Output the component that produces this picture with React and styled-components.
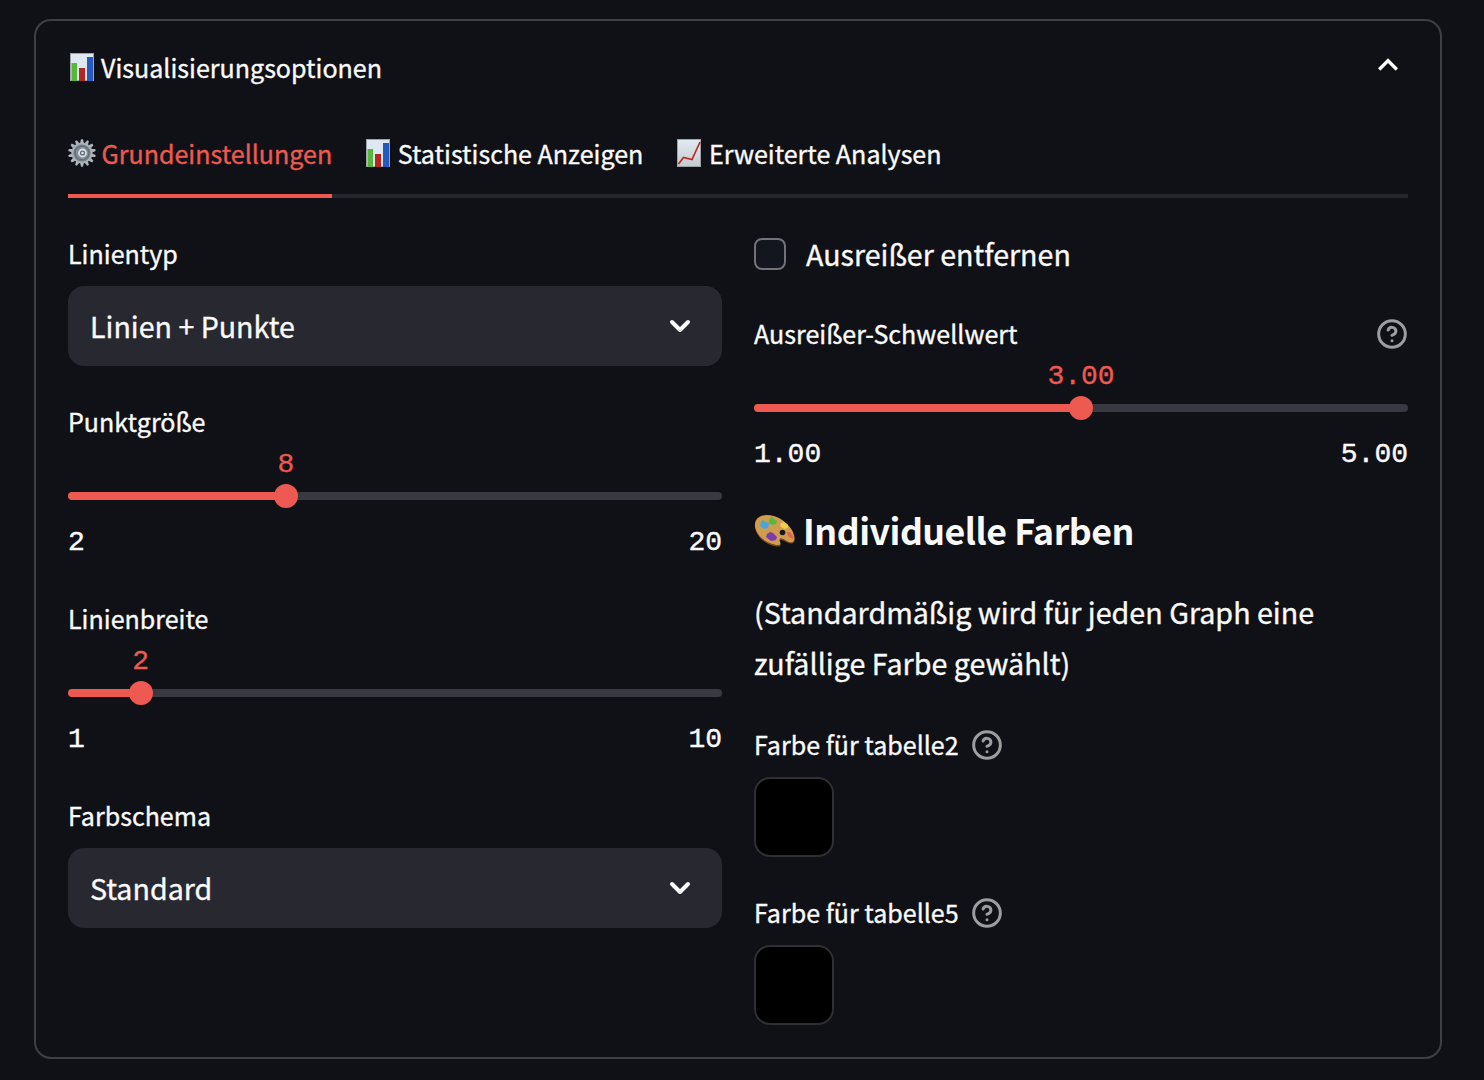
import React from "react";
import styled, { createGlobalStyle } from "styled-components";

const RED = "#ee5951";
const SANS = '"Noto Sans CJK SC", "Noto Sans", sans-serif';
const MONO = '"Liberation Mono", monospace';

const GlobalStyle = createGlobalStyle`
  *, *::before, *::after { box-sizing: border-box; }
  body {
    margin: 0;
    background: #101116;
    color: #fafafa;
    font-family: ${SANS};
    -webkit-font-smoothing: antialiased;
  }
  svg { display: block; flex: none; }
`;

const Page = styled.main`
  min-height: 1080px;
  padding: 19px 42px 21px 34px;
`;

const Panel = styled.section`
  height: 1040px;
  padding: 0 32px;
  border: 2px solid #3f4045;
  border-radius: 17px;
`;

const Summary = styled.header`
  display: flex;
  align-items: flex-start;
  justify-content: space-between;
  height: 90px;
  padding-top: 24px;
`;

const Text = styled.span`
  font-size: ${(p) => p.$size || 25.05}px;
  font-weight: ${(p) => p.$weight || 400};
  letter-spacing: ${(p) => p.$track || 0}px;
  line-height: 40px;
  white-space: nowrap;
  -webkit-text-stroke: ${(p) => (p.$weight ? 0 : 0.35)}px currentColor;
`;

const Title = styled.div`
  display: flex;
  align-items: center;
  gap: 5px;
  padding-top: 2px;
`;

const Tabs = styled.nav`
  display: flex;
  gap: 32px;
  height: 87px;
  border-bottom: 4px solid #26272c;
`;

const Tab = styled.button`
  display: flex;
  align-items: center;
  gap: 5.5px;
  height: 87px;
  padding: 0;
  border: 0;
  border-bottom: 4px solid ${(p) => (p.$active ? RED : "transparent")};
  background: none;
  color: ${(p) => (p.$active ? RED : "#fafafa")};
  font-family: inherit;
`;

const Columns = styled.div`
  display: grid;
  grid-template-columns: 1fr 1fr;
  gap: 32px;
  padding-top: 32px;
`;

const Column = styled.div`
  display: flex;
  flex-direction: column;
  gap: 32px;
`;

const Label = styled.div`
  display: flex;
  align-items: center;
  justify-content: ${(p) => (p.$spread ? "space-between" : "flex-start")};
  gap: 12px;
  height: 48px;

  ${Text} { padding-bottom: 2px; }
`;

const SelectBox = styled.div`
  display: flex;
  align-items: center;
  justify-content: space-between;
  height: 80px;
  margin-top: 8px;
  padding: 0 22px;
  border-radius: 16px;
  background: #282830;
`;

const SliderBody = styled.div`
  display: flow-root;
  height: 117px;
`;

const Track = styled.div`
  position: relative;
  height: 8px;
  margin: 46px 0 27px;
  border-radius: 4px;
  background: linear-gradient(to right, ${RED} ${(p) => p.$at}%, #383941 ${(p) => p.$at}%);
`;

const Thumb = styled.div`
  position: absolute;
  top: -8px;
  left: ${(p) => p.$at}%;
  width: 24px;
  height: 24px;
  margin-left: -12px;
  border-radius: 50%;
  background: ${RED};
`;

const Value = styled.span`
  position: absolute;
  bottom: 27px;
  left: 50%;
  transform: translateX(-50%);
  color: ${RED};
  font: 28px/32px ${MONO};
  -webkit-text-stroke: 0.3px currentColor;
`;

const Limits = styled.div`
  display: flex;
  justify-content: space-between;
  font: 28px/32px ${MONO};
  -webkit-text-stroke: 0.4px currentColor;
`;

const CheckRow = styled.label`
  display: flex;
  align-items: center;
  gap: 20px;
  height: 48px;
`;

const Box = styled.span`
  width: 32px;
  height: 32px;
  border: 2px solid #727378;
  border-radius: 8px;
  background: #13161f;
`;

const Heading = styled.h3`
  display: flex;
  align-items: center;
  gap: 8px;
  height: 48px;
  margin: 0;

  ${Text} { padding-bottom: 2px; }
`;

const Note = styled.p`
  height: 102px;
  margin: -1px 0 1px;
  font-size: 28.66px;
  line-height: 51px;
  -webkit-text-stroke: 0.35px currentColor;
`;

const Swatch = styled.div`
  width: 80px;
  height: 80px;
  margin-top: 8px;
  border: 2px solid #303033;
  border-radius: 16px;
  background: #000;
`;

function BarChartIcon() {
  return (
    <svg width="28" height="30" viewBox="0 0 28 30">
      <rect x="2" y="1" width="24" height="28" fill="#9ba3ab" />
      <rect x="3" y="2" width="22" height="26" fill="#dfe7f0" />
      <rect x="3.5" y="11" width="5.5" height="18" fill="#55b73b" />
      <rect x="11" y="16" width="6" height="13" fill="#b3271e" />
      <rect x="19" y="5" width="6" height="24" fill="#2459bf" />
    </svg>
  );
}

function LineChartIcon() {
  return (
    <svg width="28" height="30" viewBox="0 0 28 30">
      <defs>
        <linearGradient id="paper" x1="0" y1="0" x2="0" y2="1">
          <stop offset="0" stopColor="#e1e9f2" />
          <stop offset="1" stopColor="#c5cccf" />
        </linearGradient>
      </defs>
      <rect x="2" y="1" width="24" height="28" fill="#9ba3ab" />
      <rect x="3" y="2" width="22" height="26" fill="url(#paper)" />
      <path d="M3.500 26 8.500 19.500 17 21.500 25 4" fill="none" stroke="#bd2b25" strokeWidth="1.7" />
    </svg>
  );
}

function GearIcon() {
  const teeth = Array.from({ length: 14 }, (_, i) => (i * 360) / 14);
  return (
    <svg width="28" height="30" viewBox="0 0 28 30">
      {teeth.map((a) => (
        <path key={a} d="M12.200 5 13 1.200H15L15.800 5Z" fill="#aeb6bd" transform={`rotate(${a} 14 15)`} />
      ))}
      <circle cx="14" cy="15" r="9.6" fill="#737c85" stroke="#a9b1b8" strokeWidth="2" />
      <circle cx="14" cy="15" r="6.8" fill="#858e96" stroke="#626b73" strokeWidth="1" />
      <circle cx="14.5" cy="15" r="3.5" fill="#646c74" stroke="#d9dfe4" strokeWidth="1.8" />
      <circle cx="14.5" cy="15" r="1.2" fill="#e7ebee" />
    </svg>
  );
}

function PaletteIcon() {
  return (
    <svg width="41" height="34" viewBox="0 0 41 34">
      <path
        d="M13 2C5 2 0 6.500 1 13.500C2.200 22 11 31.500 23 32.500C26 32.700 27.500 31.500 26.500 29.500C25.500 27.500 25.500 25.800 27.500 26C31 26.500 34 30 38 29.500C42 28.500 41.500 22 38 16.500C33 8 22.500 2 13 2Z"
        fill="#75471e"
      />
      <path
        d="M13 1C5 1 .5 5.500 1 12C2 20.500 11 29.500 22.500 31C25.500 31.300 27 30 26 28C25 25.800 25.500 24 27.500 24.400C31 25 34 28.500 37.500 28.300C41.500 28 41 21.500 37.500 15.500C32.500 7 22 1 13 1Z"
        fill="#cf9d50"
      />
      <path d="m7 8 2-2 3 2 3 1-1 5-4 1-4-3Z" fill="#4ba5dc" />
      <path d="m15 7 2-4 3 2 3 2-1 3-4 1-3-2Z" fill="#58b83d" />
      <path d="m27 9 3-1 4 3v3l-4 1-4-3Z" fill="#f0cc4b" />
      <path d="m33 18 3 0 4 5-1 2-4-2-2-3Z" fill="#e56450" />
      <path d="m13 20 3-2 3 1 4 4-1 3-5 1-5-4Z" fill="#7f3aad" />
      <circle cx="28.500" cy="18.500" r="2.800" fill="#171519" />
    </svg>
  );
}

function ChevronUp() {
  return (
    <svg width="40" height="40" viewBox="0 0 24 24" fill="#fafafa">
      <path d="M12 8l-6 6 1.410 1.410L12 10.830l4.590 4.580L18 14z" />
    </svg>
  );
}

function ChevronDown() {
  return (
    <svg width="40" height="40" viewBox="0 0 40 40" fill="none" stroke="#fafafa" strokeWidth="4" strokeLinecap="round" strokeLinejoin="round">
      <path d="m12 16 8 8 8-8" />
    </svg>
  );
}

function HelpIcon() {
  return (
    <svg width="32" height="32" viewBox="0 0 24 24" fill="none" stroke="#9d9da0" strokeWidth="2.25" strokeLinecap="round" strokeLinejoin="round">
      <circle cx="12" cy="12" r="10" />
      <path d="M9.090 9a3 3 0 0 1 5.830 1c0 2-3 3-3 3" />
      <path d="M12 17h.01" />
    </svg>
  );
}

function Select({ label, value }) {
  return (
    <div>
      <Label><Text>{label}</Text></Label>
      <SelectBox>
        <Text $size={28.6}>{value}</Text>
        <ChevronDown />
      </SelectBox>
    </div>
  );
}

function Slider({ label, value, min, max, help }) {
  const at = ((Number(value) - Number(min)) / (Number(max) - Number(min))) * 100;
  return (
    <div>
      <Label $spread>
        <Text>{label}</Text>
        {help && <HelpIcon />}
      </Label>
      <SliderBody>
        <Track $at={at}>
          <Thumb $at={at}><Value>{value}</Value></Thumb>
        </Track>
        <Limits><span>{min}</span><span>{max}</span></Limits>
      </SliderBody>
    </div>
  );
}

function ColorPicker({ label }) {
  return (
    <div>
      <Label><Text>{label}</Text><HelpIcon /></Label>
      <Swatch />
    </div>
  );
}

export default function App() {
  return (
    <>
      <GlobalStyle />
      <Page>
        <Panel>
          <Summary>
            <Title><BarChartIcon /><Text>Visualisierungsoptionen</Text></Title>
            <ChevronUp />
          </Summary>
          <Tabs>
            <Tab $active><GearIcon /><Text>Grundeinstellungen</Text></Tab>
            <Tab><BarChartIcon /><Text>Statistische Anzeigen</Text></Tab>
            <Tab><LineChartIcon /><Text>Erweiterte Analysen</Text></Tab>
          </Tabs>
          <Columns>
            <Column>
              <Select label="Linientyp" value="Linien + Punkte" />
              <Slider label="Punktgröße" value="8" min="2" max="20" />
              <Slider label="Linienbreite" value="2" min="1" max="10" />
              <Select label="Farbschema" value="Standard" />
            </Column>
            <Column>
              <CheckRow><Box /><Text $size={28.6}>Ausreißer entfernen</Text></CheckRow>
              <Slider label="Ausreißer-Schwellwert" value="3.00" min="1.00" max="5.00" help />
              <Heading><PaletteIcon /><Text $size={35.7} $weight={700} $track={-0.5}>Individuelle Farben</Text></Heading>
              <Note>(Standardmäßig wird für jeden Graph eine<br />zufällige Farbe gewählt)</Note>
              <ColorPicker label="Farbe für tabelle2" />
              <ColorPicker label="Farbe für tabelle5" />
            </Column>
          </Columns>
        </Panel>
      </Page>
    </>
  );
}
